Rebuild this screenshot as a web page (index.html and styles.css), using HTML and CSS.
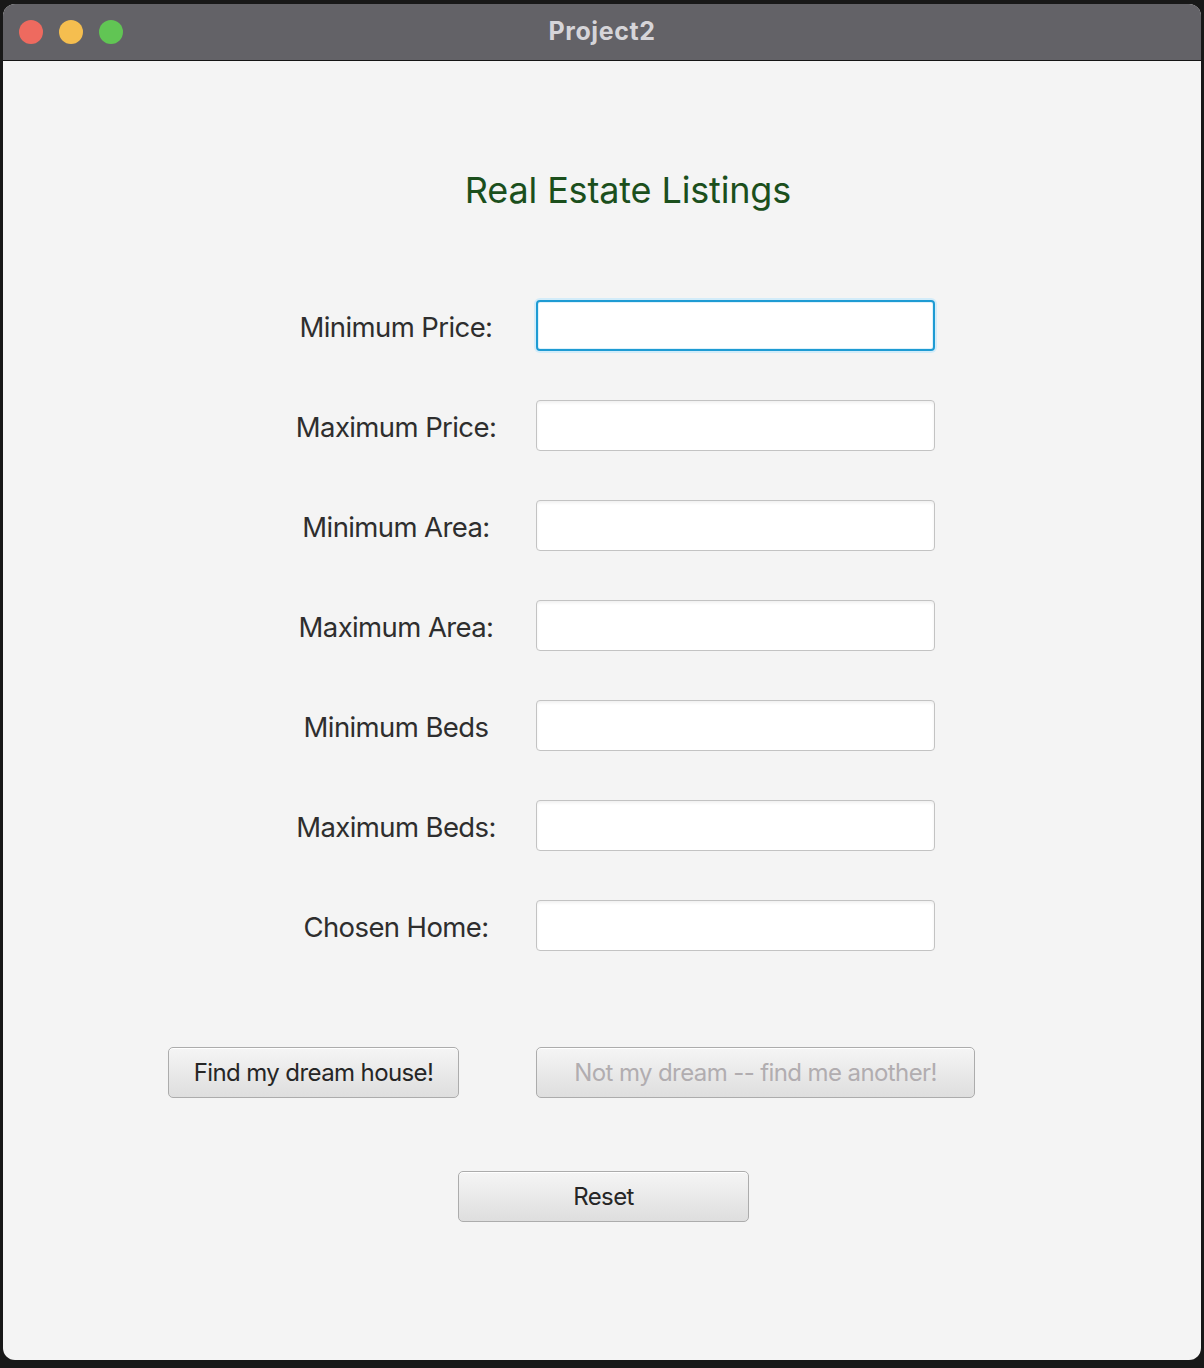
FILE: index.html
```html
<!DOCTYPE html>
<html lang="en">
<head>
<meta charset="utf-8">
<title>Project2</title>
<link rel="stylesheet" href="styles.css">
</head>
<body>
<div class="window">
  <div class="titlebar">
    <div class="lights">
      <span class="light red"></span>
      <span class="light yellow"></span>
      <span class="light green"></span>
    </div>
    <div class="title">Project2</div>
  </div>
  <div class="content">
    <h1 class="heading">Real Estate Listings</h1>
    <div class="form">
      <label class="label">Minimum Price:</label><div class="input focused"></div>
      <label class="label">Maximum Price:</label><div class="input"></div>
      <label class="label">Minimum Area:</label><div class="input"></div>
      <label class="label">Maximum Area:</label><div class="input"></div>
      <label class="label">Minimum Beds</label><div class="input"></div>
      <label class="label">Maximum Beds:</label><div class="input"></div>
      <label class="label">Chosen Home:</label><div class="input"></div>
    </div>
    <div class="actions">
      <button class="btn btn-find">Find my dream house!</button>
      <button class="btn btn-another" disabled>Not my dream -- find me another!</button>
    </div>
    <div class="reset-row">
      <button class="btn btn-reset">Reset</button>
    </div>
  </div>
</div>
</body>
</html>
```
FILE: styles.css
```css
html, body {
  margin: 0;
  padding: 0;
}
body {
  background: #181818;
  width: 1204px;
  height: 1368px;
  overflow: hidden;
  font-family: Inter, "Noto Sans", sans-serif;
}
.window {
  margin: 4px 3px 0 3px;
  width: 1198px;
  height: 1356px;
  border-radius: 12px;
  overflow: hidden;
  background: #f4f4f4;
  display: flex;
  flex-direction: column;
}
.titlebar {
  height: 56px;
  background: #636267;
  border-bottom: 1px solid #151515;
  position: relative;
  display: flex;
  align-items: center;
  justify-content: center;
  flex: none;
}
.lights {
  position: absolute;
  left: 16px;
  top: 16px;
  display: flex;
  gap: 16px;
}
.light {
  width: 24px;
  height: 24px;
  border-radius: 50%;
  display: block;
}
.red { background: #ee6a5f; }
.yellow { background: #f5be4f; }
.green { background: #61c554; }
.title {
  color: #d6d5d9;
  font-weight: 700;
  font-size: 25px;
  letter-spacing: 0.6px;
  margin-top: -2px;
}
.content {
  flex: 1;
  display: flex;
  flex-direction: column;
}
.heading {
  margin: 107px 0 0 0;
  padding-left: 52px;
  text-align: center;
  font-weight: 400;
  font-size: 36px;
  line-height: 44px;
  color: #1b4f1c;
  letter-spacing: -0.15px;
}
.form {
  margin: 88px 0 0 283px;
  display: grid;
  grid-template-columns: 220px 399px;
  column-gap: 30px;
  row-gap: 49px;
  align-items: center;
}
.label {
  text-align: center;
  white-space: nowrap;
  font-size: 27.5px;
  color: #2e2e2e;
  letter-spacing: -0.6px;
  padding-top: 3px;
}
.input {
  height: 49px;
  background: #ffffff;
  border: 1px solid #c3c3c3;
  border-radius: 4px;
  box-shadow: inset 0 2px 3px rgba(0,0,0,0.06);
}
.input.focused {
  height: 47px;
  border: 2px solid #1e9bd3;
  box-shadow: 0 0 0 2px #d3ecf9, inset 0 0 0 1px #dff2fb;
}
.actions {
  margin: 96px 0 0 165px;
  display: flex;
  gap: 77px;
}
.btn {
  height: 51px;
  border: 1.5px solid #acacac;
  border-radius: 5px;
  background: linear-gradient(#f5f5f5, #dedede);
  box-shadow: inset 0 1px 0 #ffffff;
  font-family: Inter, "Noto Sans", sans-serif;
  font-size: 24px;
  color: #262626;
  letter-spacing: -0.6px;
  padding: 0;
}
.btn-find { width: 291px; }
.btn-another {
  width: 439px;
  color: #b1adb0;
}
.reset-row {
  margin: 73px 0 0 455px;
  display: flex;
}
.btn-reset { width: 291px; }
```
